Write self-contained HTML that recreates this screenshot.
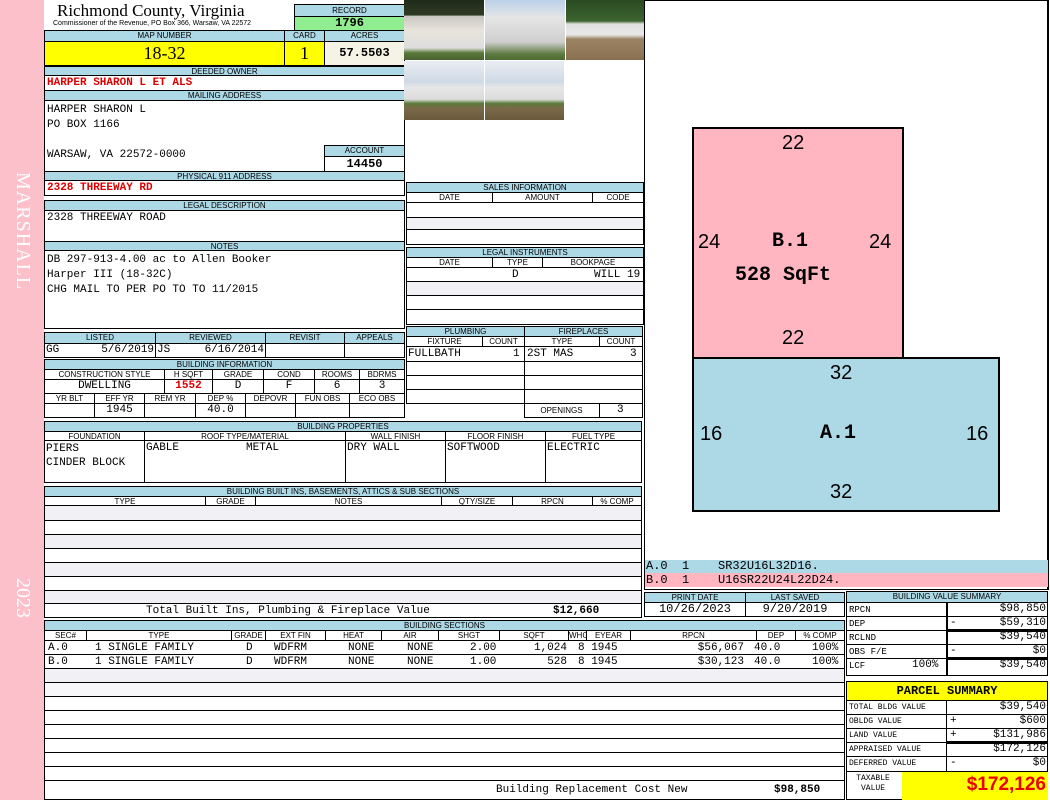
<!DOCTYPE html>
<html><head><meta charset="utf-8"><style>
*{margin:0;padding:0;box-sizing:border-box}
body{width:1050px;height:800px;background:#fff;position:relative;overflow:hidden;font-family:"Liberation Mono",monospace;font-size:11px;color:#000}
div{position:absolute}
.h{background:#add8e6;border:1px solid #000;font:8px/9px "Liberation Sans",sans-serif;text-align:center;overflow:hidden;white-space:nowrap}
.bx{border:1px solid #000}
.t{white-space:nowrap;font-size:11px;line-height:13px}
.r{color:#d00;font-weight:bold}
.c{text-align:center}
.rt{text-align:right}
.sm{font-size:8px;line-height:12px}
.sh{border:1px solid #000;text-align:center;font:8px/9px "Liberation Sans",sans-serif;white-space:nowrap;overflow:hidden}
</style></head><body>
<div style="left:0;top:0;width:44px;height:800px;background:#fcc0ca"></div>
<div style="left:10px;top:172px;width:24px;height:140px;color:#fff;font:20px 'Liberation Serif',serif;writing-mode:vertical-rl;letter-spacing:1px">MARSHALL</div>
<div style="left:10px;top:578px;width:24px;height:50px;color:#fff;font:20px 'Liberation Serif',serif;writing-mode:vertical-rl">2023</div>

<div style="left:57px;top:1px;font:17px/20px 'Liberation Serif',serif;white-space:nowrap">Richmond County, Virginia</div>
<div style="left:53px;top:19px;font:7px/9px 'Liberation Sans',sans-serif;white-space:nowrap">Commissioner of the Revenue, PO Box 366, Warsaw, VA 22572</div>
<div class="h" style="left:294px;top:4px;width:111px;height:13px;line-height:11px">RECORD</div>
<div class="bx c" style="left:294px;top:16px;width:111px;height:15px;background:#90ee90;font-weight:bold;font-size:12px;line-height:13px">1796</div>

<div class="h" style="left:44px;top:30px;width:241px;height:12px">MAP NUMBER</div>
<div class="h" style="left:284px;top:30px;width:41px;height:12px">CARD</div>
<div class="h" style="left:324px;top:30px;width:81px;height:12px">ACRES</div>
<div class="bx c" style="left:44px;top:41px;width:241px;height:25px;background:#ff0;font:18px/23px 'Liberation Serif',serif">18-32</div>
<div class="bx c" style="left:284px;top:41px;width:41px;height:25px;background:#ff0;font:18px/23px 'Liberation Serif',serif">1</div>
<div class="bx c" style="left:324px;top:41px;width:81px;height:25px;background:#f5f3e6;font-weight:bold;font-size:12px;line-height:23px">57.5503</div>

<div class="h" style="left:44px;top:66px;width:361px;height:10px">DEEDED OWNER</div>
<div class="bx" style="left:44px;top:75px;width:361px;height:16px"></div>
<div class="t r" style="left:47px;top:77px">HARPER SHARON L ET ALS</div>
<div class="h" style="left:44px;top:90px;width:361px;height:11px">MAILING ADDRESS</div>
<div class="bx" style="left:44px;top:100px;width:361px;height:72px"></div>
<div class="t" style="left:47px;top:103px;line-height:15px">HARPER SHARON L<br>PO BOX 1166<br><br>WARSAW, VA 22572-0000</div>
<div class="h" style="left:324px;top:145px;width:81px;height:12px">ACCOUNT</div>
<div class="bx c" style="left:324px;top:156px;width:81px;height:16px;font-weight:bold;font-size:12px;line-height:14px">14450</div>
<div class="h" style="left:44px;top:171px;width:361px;height:10px">PHYSICAL 911 ADDRESS</div>
<div class="bx" style="left:44px;top:180px;width:361px;height:16px"></div>
<div class="t r" style="left:47px;top:182px">2328 THREEWAY RD</div>

<div class="h" style="left:44px;top:200px;width:361px;height:11px">LEGAL DESCRIPTION</div>
<div class="bx" style="left:44px;top:210px;width:361px;height:32px"></div>
<div class="t" style="left:47px;top:212px">2328 THREEWAY ROAD</div>
<div class="h" style="left:44px;top:241px;width:361px;height:10px">NOTES</div>
<div class="bx" style="left:44px;top:250px;width:361px;height:79px"></div>
<div class="t" style="left:47px;top:253px;line-height:15px">DB 297-913-4.00 ac to Allen Booker<br>Harper III (18-32C)<br>CHG MAIL TO PER PO TO TO 11/2015</div>

<!-- listed -->
<div class="h" style="left:44px;top:332px;width:112px;height:12px">LISTED</div>
<div class="h" style="left:155px;top:332px;width:111px;height:12px">REVIEWED</div>
<div class="h" style="left:265px;top:332px;width:80px;height:12px">REVISIT</div>
<div class="h" style="left:344px;top:332px;width:61px;height:12px">APPEALS</div>
<div class="bx" style="left:44px;top:343px;width:112px;height:15px"></div>
<div class="bx" style="left:155px;top:343px;width:111px;height:15px"></div>
<div class="bx" style="left:265px;top:343px;width:80px;height:15px"></div>
<div class="bx" style="left:344px;top:343px;width:61px;height:15px"></div>
<div class="t" style="left:46px;top:344px">GG</div><div class="t rt" style="left:90px;top:344px;width:64px">5/6/2019</div>
<div class="t" style="left:157px;top:344px">JS</div><div class="t rt" style="left:190px;top:344px;width:74px">6/16/2014</div>

<!-- building info -->
<div class="h" style="left:44px;top:359px;width:361px;height:11px">BUILDING INFORMATION</div>
<div class="sh" style="left:44px;top:369px;width:121px;height:11px">CONSTRUCTION STYLE</div>
<div class="sh" style="left:164px;top:369px;width:49px;height:11px">H SQFT</div>
<div class="sh" style="left:212px;top:369px;width:52px;height:11px">GRADE</div>
<div class="sh" style="left:263px;top:369px;width:52px;height:11px">COND</div>
<div class="sh" style="left:314px;top:369px;width:46px;height:11px">ROOMS</div>
<div class="sh" style="left:359px;top:369px;width:46px;height:11px">BDRMS</div>
<div class="bx t c" style="left:44px;top:379px;width:121px;height:15px">DWELLING</div>
<div class="bx t c r" style="left:164px;top:379px;width:49px;height:15px">1552</div>
<div class="bx t c" style="left:212px;top:379px;width:52px;height:15px">D</div>
<div class="bx t c" style="left:263px;top:379px;width:52px;height:15px">F</div>
<div class="bx t c" style="left:314px;top:379px;width:46px;height:15px">6</div>
<div class="bx t c" style="left:359px;top:379px;width:46px;height:15px">3</div>
<div class="sh" style="left:44px;top:393px;width:51px;height:11px">YR BLT</div>
<div class="sh" style="left:94px;top:393px;width:51px;height:11px">EFF YR</div>
<div class="sh" style="left:144px;top:393px;width:52px;height:11px">REM YR</div>
<div class="sh" style="left:195px;top:393px;width:51px;height:11px">DEP %</div>
<div class="sh" style="left:245px;top:393px;width:51px;height:11px">DEPOVR</div>
<div class="sh" style="left:295px;top:393px;width:55px;height:11px">FUN OBS</div>
<div class="sh" style="left:349px;top:393px;width:56px;height:11px">ECO OBS</div>
<div class="bx" style="left:44px;top:403px;width:51px;height:15px"></div>
<div class="bx t c" style="left:94px;top:403px;width:51px;height:15px">1945</div>
<div class="bx" style="left:144px;top:403px;width:52px;height:15px"></div>
<div class="bx t c" style="left:195px;top:403px;width:51px;height:15px">40.0</div>
<div class="bx" style="left:245px;top:403px;width:51px;height:15px"></div>
<div class="bx" style="left:295px;top:403px;width:55px;height:15px"></div>
<div class="bx" style="left:349px;top:403px;width:56px;height:15px"></div>

<!-- building properties -->
<div class="h" style="left:44px;top:421px;width:598px;height:11px">BUILDING PROPERTIES</div>
<div class="bx" style="left:44px;top:431px;width:598px;height:52px"></div>
<div class="sh" style="left:44px;top:431px;width:101px;height:10px">FOUNDATION</div>
<div class="sh" style="left:144px;top:431px;width:202px;height:10px">ROOF TYPE/MATERIAL</div>
<div class="sh" style="left:345px;top:431px;width:101px;height:10px">WALL FINISH</div>
<div class="sh" style="left:445px;top:431px;width:101px;height:10px">FLOOR FINISH</div>
<div class="sh" style="left:545px;top:431px;width:97px;height:10px">FUEL TYPE</div>
<div style="left:144px;top:440px;width:1px;height:43px;background:#000"></div>
<div style="left:345px;top:440px;width:1px;height:43px;background:#000"></div>
<div style="left:445px;top:440px;width:1px;height:43px;background:#000"></div>
<div style="left:545px;top:440px;width:1px;height:43px;background:#000"></div>
<div class="t" style="left:46px;top:442px;line-height:14px">PIERS<br>CINDER BLOCK</div>
<div class="t" style="left:146px;top:442px">GABLE</div><div class="t" style="left:246px;top:442px">METAL</div>
<div class="t" style="left:347px;top:442px">DRY WALL</div>
<div class="t" style="left:447px;top:442px">SOFTWOOD</div>
<div class="t" style="left:547px;top:442px">ELECTRIC</div>

<!-- built ins -->
<div class="h" style="left:44px;top:486px;width:598px;height:11px">BUILDING BUILT INS, BASEMENTS, ATTICS &amp; SUB SECTIONS</div>
<div class="bx" style="left:44px;top:496px;width:598px;height:122px"></div>
<div class="sh" style="left:44px;top:496px;width:162px;height:10px">TYPE</div>
<div class="sh" style="left:205px;top:496px;width:51px;height:10px">GRADE</div>
<div class="sh" style="left:255px;top:496px;width:187px;height:10px">NOTES</div>
<div class="sh" style="left:441px;top:496px;width:72px;height:10px">QTY/SIZE</div>
<div class="sh" style="left:512px;top:496px;width:81px;height:10px">RPCN</div>
<div class="sh" style="left:592px;top:496px;width:50px;height:10px">% COMP</div>
<div style="left:45px;top:506px;width:596px;height:14px;background:#f0f0f5"></div>
<div style="left:45px;top:534px;width:596px;height:14px;background:#f0f0f5"></div>
<div style="left:45px;top:562px;width:596px;height:14px;background:#f0f0f5"></div>
<div style="left:45px;top:590px;width:596px;height:13px;background:#f0f0f5"></div>
<div style="left:44px;top:520px;width:598px;height:1px;background:#000"></div>
<div style="left:44px;top:534px;width:598px;height:1px;background:#000"></div>
<div style="left:44px;top:548px;width:598px;height:1px;background:#000"></div>
<div style="left:44px;top:562px;width:598px;height:1px;background:#000"></div>
<div style="left:44px;top:576px;width:598px;height:1px;background:#000"></div>
<div style="left:44px;top:590px;width:598px;height:1px;background:#000"></div>
<div style="left:44px;top:603px;width:598px;height:1px;background:#000"></div>
<div class="t" style="left:146px;top:605px">Total Built Ins, Plumbing &amp; Fireplace Value</div>
<div class="t" style="left:553px;top:605px;font-weight:bold">$12,660</div>

<!-- photos -->
<div style="left:404px;top:0;width:80px;height:60px;background:linear-gradient(#1f2b1a 0,#2f3a24 25%,#c8c6c0 27%,#e8e4dc 50%,#ddd 80%,#5a7a3a 88%,#4a6030 100%)"></div>
<div style="left:485px;top:0;width:80px;height:60px;background:linear-gradient(#bcd0e8 0,#d8dfe8 20%,#e5e5e5 30%,#cfcfcf 70%,#5d7a40 90%,#4d6a30 100%)"></div>
<div style="left:566px;top:0;width:78px;height:60px;background:linear-gradient(#2a4a22 0,#3d6430 35%,#e0e0e0 40%,#e8e8e8 58%,#9b8464 65%,#8a7050 100%)"></div>
<div style="left:404px;top:61px;width:80px;height:59px;background:linear-gradient(#e8edf2 0,#d0dae6 35%,#e6e6e6 45%,#dcdcdc 65%,#5a7a3a 72%,#7a6a4a 80%,#6a5a3c 100%)"></div>
<div style="left:485px;top:61px;width:79px;height:59px;background:linear-gradient(#e8edf2 0,#d0dae6 35%,#e6e6e6 45%,#dcdcdc 65%,#5a7a3a 72%,#7a6a4a 80%,#6a5a3c 100%)"></div>

<!-- sales information -->
<div class="bx" style="left:406px;top:182px;width:238px;height:63px"></div>
<div class="h" style="left:406px;top:182px;width:238px;height:11px">SALES INFORMATION</div>
<div class="sh" style="left:406px;top:192px;width:87px;height:11px">DATE</div>
<div class="sh" style="left:492px;top:192px;width:101px;height:11px">AMOUNT</div>
<div class="sh" style="left:592px;top:192px;width:52px;height:11px">CODE</div>
<div style="left:407px;top:217px;width:236px;height:13px;background:#f0f0f5;border-top:1px solid #000;border-bottom:1px solid #000"></div>

<div class="bx" style="left:406px;top:247px;width:238px;height:78px"></div>
<div class="h" style="left:406px;top:247px;width:238px;height:11px">LEGAL INSTRUMENTS</div>
<div class="sh" style="left:406px;top:257px;width:87px;height:11px">DATE</div>
<div class="sh" style="left:492px;top:257px;width:51px;height:11px">TYPE</div>
<div class="sh" style="left:542px;top:257px;width:102px;height:11px">BOOKPAGE</div>
<div class="t" style="left:512px;top:269px">D</div>
<div class="t" style="left:594px;top:269px;width:49px;overflow:hidden">WILL 19</div>
<div style="left:407px;top:281px;width:236px;height:15px;background:#f0f0f5;border-top:1px solid #000;border-bottom:1px solid #000"></div>
<div style="left:407px;top:309px;width:236px;height:1px;background:#000"></div>

<!-- plumbing / fireplaces -->
<div class="h" style="left:406px;top:326px;width:119px;height:11px">PLUMBING</div>
<div class="h" style="left:524px;top:326px;width:119px;height:11px">FIREPLACES</div>
<div class="sh" style="left:406px;top:336px;width:77px;height:11px">FIXTURE</div>
<div class="sh" style="left:482px;top:336px;width:43px;height:11px">COUNT</div>
<div class="sh" style="left:524px;top:336px;width:76px;height:11px">TYPE</div>
<div class="sh" style="left:599px;top:336px;width:44px;height:11px">COUNT</div>
<div class="bx" style="left:406px;top:346px;width:119px;height:58px"></div>
<div class="bx" style="left:524px;top:346px;width:119px;height:72px"></div>
<div class="t" style="left:408px;top:348px">FULLBATH</div><div class="t" style="left:513px;top:348px">1</div>
<div class="t" style="left:527px;top:348px">2ST MAS</div><div class="t" style="left:630px;top:348px">3</div>
<div style="left:407px;top:361px;width:236px;height:1px;background:#000"></div>
<div style="left:407px;top:375px;width:236px;height:1px;background:#000"></div>
<div style="left:407px;top:389px;width:236px;height:1px;background:#000"></div>
<div style="left:524px;top:403px;width:119px;height:1px;background:#000"></div>
<div style="left:599px;top:403px;width:1px;height:15px;background:#000"></div>
<div class="c" style="left:524px;top:404px;width:75px;font:8px/13px 'Liberation Sans'">OPENINGS</div>
<div class="t" style="left:617px;top:404px">3</div>

<!-- sketch -->
<div class="bx" style="left:644px;top:0;width:405px;height:590px;border-width:1px 2px 1px 1px"></div>
<div style="left:692px;top:127px;width:212px;height:232px;background:#ffb6c1;border:2px solid #000"></div>
<div style="left:692px;top:357px;width:308px;height:155px;background:#add8e6;border:2px solid #000"></div>
<div style="left:782px;top:132px;font:20px 'Liberation Sans',sans-serif">22</div>
<div style="left:698px;top:231px;font:20px 'Liberation Sans',sans-serif">24</div>
<div style="left:869px;top:231px;font:20px 'Liberation Sans',sans-serif">24</div>
<div style="left:772px;top:230px;font:bold 20px 'Liberation Mono',monospace">B.1</div>
<div style="left:735px;top:264px;font:bold 20px 'Liberation Mono',monospace">528 SqFt</div>
<div style="left:782px;top:327px;font:20px 'Liberation Sans',sans-serif">22</div>
<div style="left:830px;top:362px;font:20px 'Liberation Sans',sans-serif">32</div>
<div style="left:700px;top:423px;font:20px 'Liberation Sans',sans-serif">16</div>
<div style="left:966px;top:423px;font:20px 'Liberation Sans',sans-serif">16</div>
<div style="left:820px;top:422px;font:bold 20px 'Liberation Mono',monospace">A.1</div>
<div style="left:830px;top:481px;font:20px 'Liberation Sans',sans-serif">32</div>
<div style="left:645px;top:560px;width:403px;height:13px;background:#add8e6"></div>
<div style="left:645px;top:573px;width:403px;height:14px;background:#ffb6c1"></div>
<div class="t" style="left:646px;top:560px;font-size:12px">A.0&nbsp;&nbsp;1&nbsp;&nbsp;&nbsp;&nbsp;SR32U16L32D16.</div>
<div class="t" style="left:646px;top:574px;font-size:12px">B.0&nbsp;&nbsp;1&nbsp;&nbsp;&nbsp;&nbsp;U16SR22U24L22D24.</div>

<!-- print date -->
<div class="h" style="left:644px;top:592px;width:102px;height:11px">PRINT DATE</div>
<div class="h" style="left:745px;top:592px;width:100px;height:11px">LAST SAVED</div>
<div class="bx t c" style="left:644px;top:602px;width:102px;height:15px;font-size:12px">10/26/2023</div>
<div class="bx t c" style="left:745px;top:602px;width:100px;height:15px;font-size:12px">9/20/2019</div>

<!-- building value summary -->
<div class="h" style="left:846px;top:591px;width:202px;height:12px">BUILDING VALUE SUMMARY</div>
<div class="bx" style="left:846px;top:602px;width:202px;height:74px"></div>
<div style="left:946px;top:602px;width:2px;height:74px;background:#000"></div>
<div style="left:847px;top:616px;width:201px;height:1px;background:#000"></div>
<div style="left:947px;top:629px;width:101px;height:3px;background:#000"></div>
<div style="left:847px;top:630px;width:100px;height:1px;background:#000"></div>
<div style="left:847px;top:644px;width:201px;height:1px;background:#000"></div>
<div style="left:947px;top:657px;width:101px;height:3px;background:#000"></div>
<div style="left:847px;top:658px;width:100px;height:1px;background:#000"></div>
<div class="sm" style="left:849px;top:604px;font-size:9px">RPCN</div><div class="t rt" style="left:950px;top:603px;width:96px">$98,850</div>
<div class="sm" style="left:849px;top:618px;font-size:9px">DEP</div><div class="t" style="left:950px;top:617px">-</div><div class="t rt" style="left:950px;top:617px;width:96px">$59,310</div>
<div class="sm" style="left:849px;top:632px;font-size:9px">RCLND</div><div class="t rt" style="left:950px;top:631px;width:96px">$39,540</div>
<div class="sm" style="left:849px;top:646px;font-size:9px">OBS F/E</div><div class="t" style="left:950px;top:645px">-</div><div class="t rt" style="left:950px;top:645px;width:96px">$0</div>
<div class="sm" style="left:849px;top:660px;font-size:9px">LCF</div><div class="t" style="left:912px;top:659px">100%</div><div class="t rt" style="left:950px;top:659px;width:96px">$39,540</div>

<!-- parcel summary -->
<div class="bx c" style="left:846px;top:681px;width:202px;height:20px;background:#ff0;font:bold 12px/18px 'Liberation Mono',monospace">PARCEL SUMMARY</div>
<div class="bx" style="left:846px;top:700px;width:202px;height:100px"></div>
<div style="left:946px;top:700px;width:1px;height:72px;background:#000"></div>
<div style="left:847px;top:714px;width:201px;height:1px;background:#000"></div>
<div style="left:847px;top:728px;width:201px;height:1px;background:#000"></div>
<div style="left:947px;top:741px;width:101px;height:3px;background:#000"></div>
<div style="left:847px;top:742px;width:100px;height:1px;background:#000"></div>
<div style="left:847px;top:756px;width:201px;height:1px;background:#000"></div>
<div style="left:847px;top:771px;width:201px;height:1px;background:#000"></div>
<div class="sm" style="left:849px;top:702px">TOTAL BLDG VALUE</div><div class="t rt" style="left:950px;top:701px;width:96px">$39,540</div>
<div class="sm" style="left:849px;top:716px">OBLDG VALUE</div><div class="t" style="left:950px;top:715px">+</div><div class="t rt" style="left:950px;top:715px;width:96px">$600</div>
<div class="sm" style="left:849px;top:730px">LAND VALUE</div><div class="t" style="left:950px;top:729px">+</div><div class="t rt" style="left:950px;top:729px;width:96px">$131,986</div>
<div class="sm" style="left:849px;top:744px">APPRAISED VALUE</div><div class="t rt" style="left:950px;top:743px;width:96px">$172,126</div>
<div class="sm" style="left:849px;top:758px">DEFERRED VALUE</div><div class="t" style="left:950px;top:757px">-</div><div class="t rt" style="left:950px;top:757px;width:96px">$0</div>
<div style="left:902px;top:772px;width:146px;height:28px;background:#ff0"></div>
<div class="sm c" style="left:848px;top:774px;width:50px;line-height:10px">TAXABLE<br>VALUE</div>
<div style="left:902px;top:773px;width:144px;text-align:right;font:bold 19px/24px 'Liberation Sans',sans-serif;color:#e00">$172,126</div>

<!-- building sections -->
<div class="h" style="left:44px;top:620px;width:801px;height:11px">BUILDING SECTIONS</div>
<div class="bx" style="left:44px;top:630px;width:801px;height:170px"></div>
<div class="sh" style="left:44px;top:630px;width:43px;height:11px">SEC#</div>
<div class="sh" style="left:86px;top:630px;width:146px;height:11px">TYPE</div>
<div class="sh" style="left:231px;top:630px;width:35px;height:11px">GRADE</div>
<div class="sh" style="left:265px;top:630px;width:61px;height:11px">EXT FIN</div>
<div class="sh" style="left:325px;top:630px;width:57px;height:11px">HEAT</div>
<div class="sh" style="left:381px;top:630px;width:58px;height:11px">AIR</div>
<div class="sh" style="left:438px;top:630px;width:62px;height:11px">SHGT</div>
<div class="sh" style="left:499px;top:630px;width:70px;height:11px">SQFT</div>
<div class="sh" style="left:568px;top:630px;width:19px;height:11px">WHGT</div>
<div class="sh" style="left:586px;top:630px;width:45px;height:11px">EYEAR</div>
<div class="sh" style="left:630px;top:630px;width:127px;height:11px">RPCN</div>
<div class="sh" style="left:756px;top:630px;width:40px;height:11px">DEP</div>
<div class="sh" style="left:795px;top:630px;width:50px;height:11px">% COMP</div>
<div class="t" style="left:48px;top:642px">A.0</div><div class="t" style="left:48px;top:656px">B.0</div>
<div class="t" style="left:95px;top:642px">1 SINGLE FAMILY</div><div class="t" style="left:95px;top:656px">1 SINGLE FAMILY</div>
<div class="t" style="left:246px;top:642px">D</div><div class="t" style="left:246px;top:656px">D</div>
<div class="t" style="left:274px;top:642px">WDFRM</div><div class="t" style="left:274px;top:656px">WDFRM</div>
<div class="t" style="left:348px;top:642px">NONE</div><div class="t" style="left:348px;top:656px">NONE</div>
<div class="t" style="left:407px;top:642px">NONE</div><div class="t" style="left:407px;top:656px">NONE</div>
<div class="t" style="left:470px;top:642px">2.00</div><div class="t" style="left:470px;top:656px">1.00</div>
<div class="t rt" style="left:520px;top:642px;width:47px">1,024</div><div class="t rt" style="left:520px;top:656px;width:47px">528</div>
<div class="t" style="left:578px;top:642px">8 1945</div><div class="t" style="left:578px;top:656px">8 1945</div>
<div class="t rt" style="left:680px;top:642px;width:64px">$56,067</div><div class="t rt" style="left:680px;top:656px;width:64px">$30,123</div>
<div class="t" style="left:754px;top:642px">40.0</div><div class="t" style="left:754px;top:656px">40.0</div>
<div class="t" style="left:812px;top:642px">100%</div><div class="t" style="left:812px;top:656px">100%</div>
<div style="left:44px;top:654px;width:801px;height:1px;background:#000"></div>
<div style="left:45px;top:668px;width:799px;height:14px;background:#f0f0f5;border-top:1px solid #000"></div>
<div style="left:44px;top:682px;width:801px;height:1px;background:#000"></div>
<div style="left:45px;top:683px;width:799px;height:14px;background:#f7f7fa"></div>
<div style="left:44px;top:696px;width:801px;height:1px;background:#000"></div>
<div style="left:44px;top:710px;width:801px;height:1px;background:#000"></div>
<div style="left:44px;top:724px;width:801px;height:1px;background:#000"></div>
<div style="left:44px;top:738px;width:801px;height:1px;background:#000"></div>
<div style="left:44px;top:752px;width:801px;height:1px;background:#000"></div>
<div style="left:44px;top:766px;width:801px;height:1px;background:#000"></div>
<div style="left:44px;top:780px;width:801px;height:1px;background:#000"></div>
<div class="t" style="left:496px;top:784px">Building Replacement Cost New</div>
<div class="t" style="left:774px;top:784px;font-weight:bold">$98,850</div>
</body></html>
